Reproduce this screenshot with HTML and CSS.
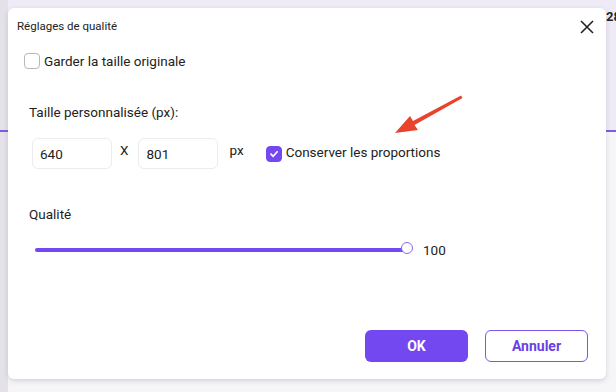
FILE: index.html
```html
<!DOCTYPE html>
<html>
<head>
<meta charset="utf-8">
<link rel="stylesheet" href="styles.css">
</head>
<body>
<div class="backdrop-num">28</div>
<div class="dialog">
  <div class="header">
    <span class="title">Réglages de qualité</span>
    <svg class="close" width="14" height="14" viewBox="0 0 14 14"><path d="M1 1L13 13M13 1L1 13" stroke="#222" stroke-width="1.6" fill="none"/></svg>
  </div>
  <label class="check-row">
    <span class="box"></span>
    <span>Garder la taille originale</span>
  </label>
  <div class="section-label">Taille personnalisée (px):</div>
  <div class="size-row">
    <div class="field">640</div>
    <span class="x">X</span>
    <div class="field">801</div>
    <span class="px">px</span>
    <span class="box checked"><svg width="10" height="10" viewBox="0 0 10 10"><path d="M2 5.2L4.2 7.3L8.2 2.8" stroke="#fff" stroke-width="1.7" fill="none" stroke-linecap="round" stroke-linejoin="round"/></svg></span>
    <span class="keep">Conserver les proportions</span>
  </div>
  <div class="section-label quality">Qualité</div>
  <div class="slider-row">
    <div class="track"><span class="thumb"></span></div>
    <span class="value">100</span>
  </div>
  <div class="actions">
    <button class="btn primary">OK</button>
    <button class="btn outline">Annuler</button>
  </div>
  <svg class="arrow" width="80" height="50" viewBox="0 0 80 50"><path d="M75 1.5 L27 27 L24 22 L9 39 L32 36 L28.5 31 L76.5 4 Z" fill="#e8432d"/></svg>
</div>
</body>
</html>
```
FILE: styles.css
```css
html, body { margin: 0; padding: 0; }
body {
  width: 616px;
  height: 392px;
  overflow: hidden;
  position: relative;
  font-family: Roboto, "Liberation Sans", sans-serif;
  color: #222;
  background:
    linear-gradient(to bottom, transparent 130px, #7d5ce0 130px, #7d5ce0 132px, transparent 132px),
    linear-gradient(to right, #e4e2e8 0, #e4e2e8 8px, transparent 8px),
    linear-gradient(to bottom, #eeeaf6 0, #eeeaf6 130px, #f6f6f8 132px, #f6f6f8 100%);
  padding: 8px 0 0 8px;
  box-sizing: border-box;
}
.backdrop-num {
  position: absolute;
  left: 606px;
  top: 9px;
  font-size: 13px;
  font-weight: bold;
  color: #222;
  white-space: nowrap;
}
.dialog {
  position: relative;
  width: 598px;
  height: 371px;
  background: #fff;
  border-radius: 6px;
  box-shadow: 0 2px 5px rgba(90, 80, 130, 0.22);
  box-sizing: border-box;
  padding: 0 0 0 9px;
}
.header {
  display: flex;
  align-items: center;
  justify-content: space-between;
  height: 34px;
  padding-right: 12px;
}
.title { font-size: 11.5px; margin-top: 1px; }
.close { margin-top: 4px; }
.check-row {
  display: flex;
  align-items: center;
  gap: 4px;
  margin-top: 11px;
  padding-left: 7px;
  font-size: 13.5px;
}
.box {
  width: 14px;
  height: 14px;
  border: 1px solid #b8b8b8;
  border-radius: 4px;
  display: inline-flex;
  align-items: center;
  justify-content: center;
  flex: none;
}
.box.checked {
  background: #7448f0;
  border-color: #7448f0;
  margin-left: 22px;
}
.section-label {
  font-size: 13.5px;
  padding-left: 12px;
  margin-top: 35px;
}
.size-row {
  display: flex;
  align-items: center;
  margin-top: 18px;
  padding-left: 15px;
  font-size: 13.5px;
}
.field {
  width: 80px;
  height: 31px;
  box-sizing: border-box;
  border: 1px solid #ececec;
  border-radius: 6px;
  padding-left: 7px;
  display: flex;
  align-items: center;
  font-size: 13.5px;
}
.x { margin: -8px 10px 0 8px; }
.px { margin: -8px 0 0 11px; }
.keep { margin-left: 4px; margin-top: -4px; }
.quality { margin-top: 37px; }
.slider-row {
  display: flex;
  align-items: center;
  margin-top: 20px;
  padding-left: 18px;
  font-size: 13.5px;
}
.track {
  position: relative;
  width: 372px;
  height: 4px;
  border-radius: 2px;
  background: #7448f0;
}
.thumb {
  position: absolute;
  right: -6px;
  top: -6px;
  width: 10px;
  height: 10px;
  border: 1.5px solid #8a68f2;
  border-radius: 50%;
  background: #fff;
}
.value { margin-left: 16px; }
.actions {
  display: flex;
  justify-content: flex-end;
  gap: 17px;
  margin-top: 72px;
  padding-right: 18px;
}
.btn {
  width: 103px;
  height: 32px;
  border-radius: 6px;
  font-family: Roboto, "Liberation Sans", sans-serif;
  font-weight: bold;
  font-size: 14px;
  cursor: pointer;
}
.primary { background: #7448f0; border: none; color: #fff; }
.outline { background: #fff; border: 1px solid #7a55ee; color: #6a40e6; }
.arrow {
  position: absolute;
  left: 378px;
  top: 86px;
}
```
